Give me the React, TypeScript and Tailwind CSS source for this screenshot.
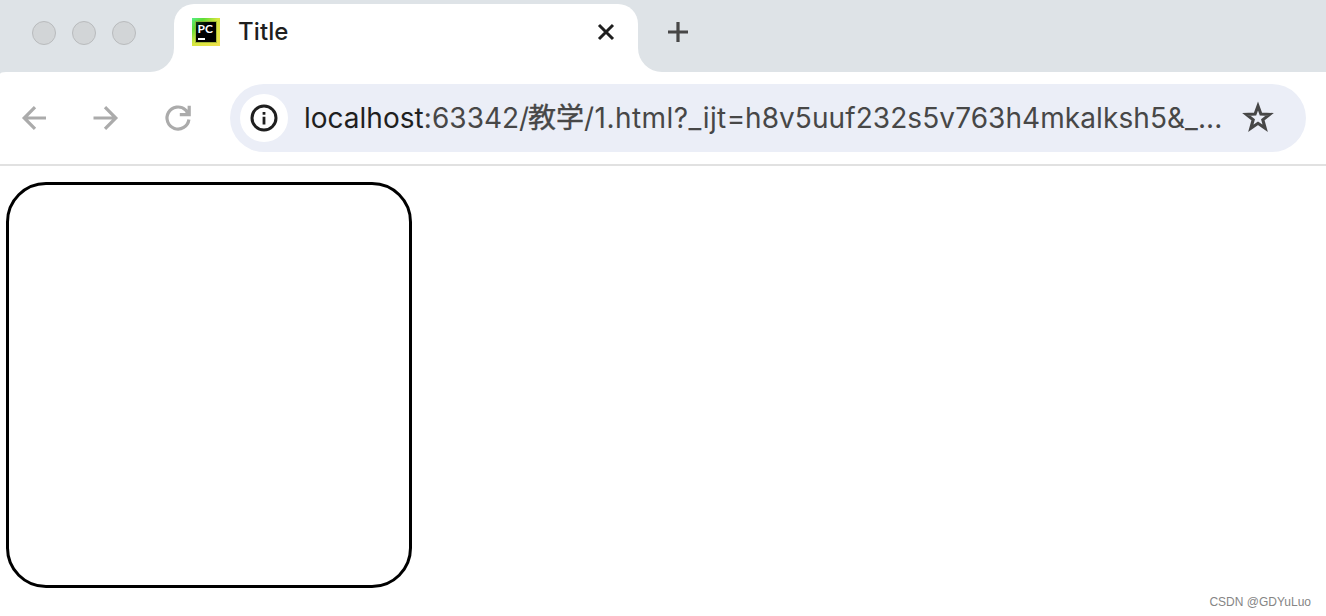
import { ReactNode } from "react"

const windowButtons = ["close", "minimize", "zoom"]

const Icon = ({ size, className, children }: { size: number; className?: string; children: ReactNode }) => (
	<svg width={size} height={size} viewBox={`0 0 ${size} ${size}`} fill="none" stroke="currentColor" className={`shrink-0 ${className ?? ""}`}>
		{children}
	</svg>
)

const Favicon = () => (
	<div className="flex size-7 shrink-0 items-center justify-center bg-[linear-gradient(135deg,#55ee88_0%,#5fdc35_22%,#d5e63f_48%,#f1e04c_100%)]">
		<div className="flex size-[22px] items-center justify-center bg-[#8ea832]/70">
			<div className="flex size-5 flex-col items-start bg-linear-to-br from-[#123d16] to-black to-45% pt-0.5 pl-[1.5px]">
				<span className="font-['Lato','Inter',sans-serif] text-[12px] leading-[10px] font-bold text-white">PC</span>
				<span className="mt-[4px] ml-[0.5px] h-0.5 w-[7px] bg-white"></span>
			</div>
		</div>
	</div>
)

const TabStrip = () => (
	<div className="flex h-[72px] w-full">
		<div className="h-full w-[174px] shrink-0 bg-white">
			<div className="flex h-full items-center gap-4 rounded-br-[24px] bg-[#dee3e7] pb-1.5 pl-8">
				{windowButtons.map((button) => (
					<span key={button} className="size-6 rounded-full border border-[#b9bbbd] bg-[#d2d5d7]"></span>
				))}
			</div>
		</div>
		<div className="h-full w-[464px] shrink-0 bg-[#dee3e7] pt-1">
			<div className="flex h-full items-center rounded-t-[20px] bg-white pr-[22px] pb-3 pl-[18px]">
				<Favicon />
				<p className="ml-[18px] flex-1 text-[24px] leading-7 font-medium tracking-[0.1px] text-[#1f1f1f]">Title</p>
				<Icon size={20} className="text-[#1f1f1f]">
					<path d="M3 3 17 17M17 3 3 17" strokeWidth="3" />
				</Icon>
			</div>
		</div>
		<div className="h-full flex-1 bg-white">
			<div className="flex h-full items-center rounded-bl-[24px] bg-[#dee3e7] pb-2 pl-[29px]">
				<Icon size={22} className="text-[#474747]">
					<path d="M11 1v20M1 11h20" strokeWidth="3.2" />
				</Icon>
			</div>
		</div>
	</div>
)

const AddressBar = () => (
	<div className="flex h-[68px] w-[1076px] shrink-0 items-center rounded-full bg-[#ebeef7] pl-2.5">
		<span className="grid size-12 shrink-0 place-items-center rounded-full bg-white">
			<Icon size={28} className="text-[#1f1f1f]">
				<circle cx="14" cy="14" r="12" strokeWidth="3" />
				<path d="M14 12.7V20.5M14 8v2.8" strokeWidth="2.8" />
			</Icon>
		</span>
		<p className="ml-4 flex w-[922px] shrink-0 text-[28px] leading-9 whitespace-nowrap text-[#474747]">
			<span className="w-32 shrink-0 text-[#1f1f1f]">localhost<span className="text-[#474747]">:</span></span>
			<span className="w-24 shrink-0">63342/</span>
			<span className="w-14 shrink-0 [-webkit-text-stroke:0.4px_#474747]">教学</span>
			<span className="w-[161px] shrink-0 tracking-[0.45px]">/1.html?_ijt=</span>
			<span className="tracking-[0.08px]">h8v5uuf232s5v763h4mkalksh5&amp;_...</span>
		</p>
		<Icon size={36} className="ml-3.5 text-[#474747]">
			<path
				d="M18 6 20.9 14.1 29.6 14.4 22.8 19.8 25.2 28.2 18 23.3 10.8 28.2 13.2 19.8 6.4 14.4 15.1 14.1Z"
				strokeWidth="3.1"
			/>
		</Icon>
	</div>
)

const Toolbar = () => (
	<div className="w-full bg-[#dee3e7]">
		<div className="flex h-[94px] w-full items-center rounded-tl-[6px_2px] border-b-2 border-[#e1e1e1] bg-white pl-5">
			<Icon size={28} className="text-[#ababab]">
				<path d="M26 14H4.5M15 3.2 4.2 14 15 24.8" strokeWidth="3.2" />
			</Icon>
			<Icon size={28} className="ml-[44px] text-[#ababab]">
				<path d="M1.5 14h22M13 3.2 23.8 14 13 24.8" strokeWidth="3.2" />
			</Icon>
			<Icon size={28} className="ml-[44px] text-[#ababab]">
				<path d="M24.9 15.5A11 11 0 1 1 21.4 5.9L24.4 8.9M25.2 1.7v8.9h-9.4" strokeWidth="3.2" />
				<path d="M25 5v5.5h-5.5Z" fill="currentColor" stroke="none" />
			</Icon>
			<div className="ml-[38px]">
				<AddressBar />
			</div>
		</div>
	</div>
)

export default function App() {
	return (
		<div className="flex h-[616px] w-[1326px] flex-col overflow-hidden bg-white font-['Inter','Noto_Sans_CJK_SC',sans-serif]">
			<TabStrip />
			<Toolbar />
			<main className="flex flex-1 items-start justify-between pt-4 pr-[15px] pl-1.5">
				<div className="size-[406px] rounded-[40px] border-3 border-black"></div>
				<p className="self-end pb-[7px] font-['Liberation_Sans',sans-serif] text-[12px] leading-[13px] text-[#858585]">
					CSDN @GDYuLuo
				</p>
			</main>
		</div>
	)
}
